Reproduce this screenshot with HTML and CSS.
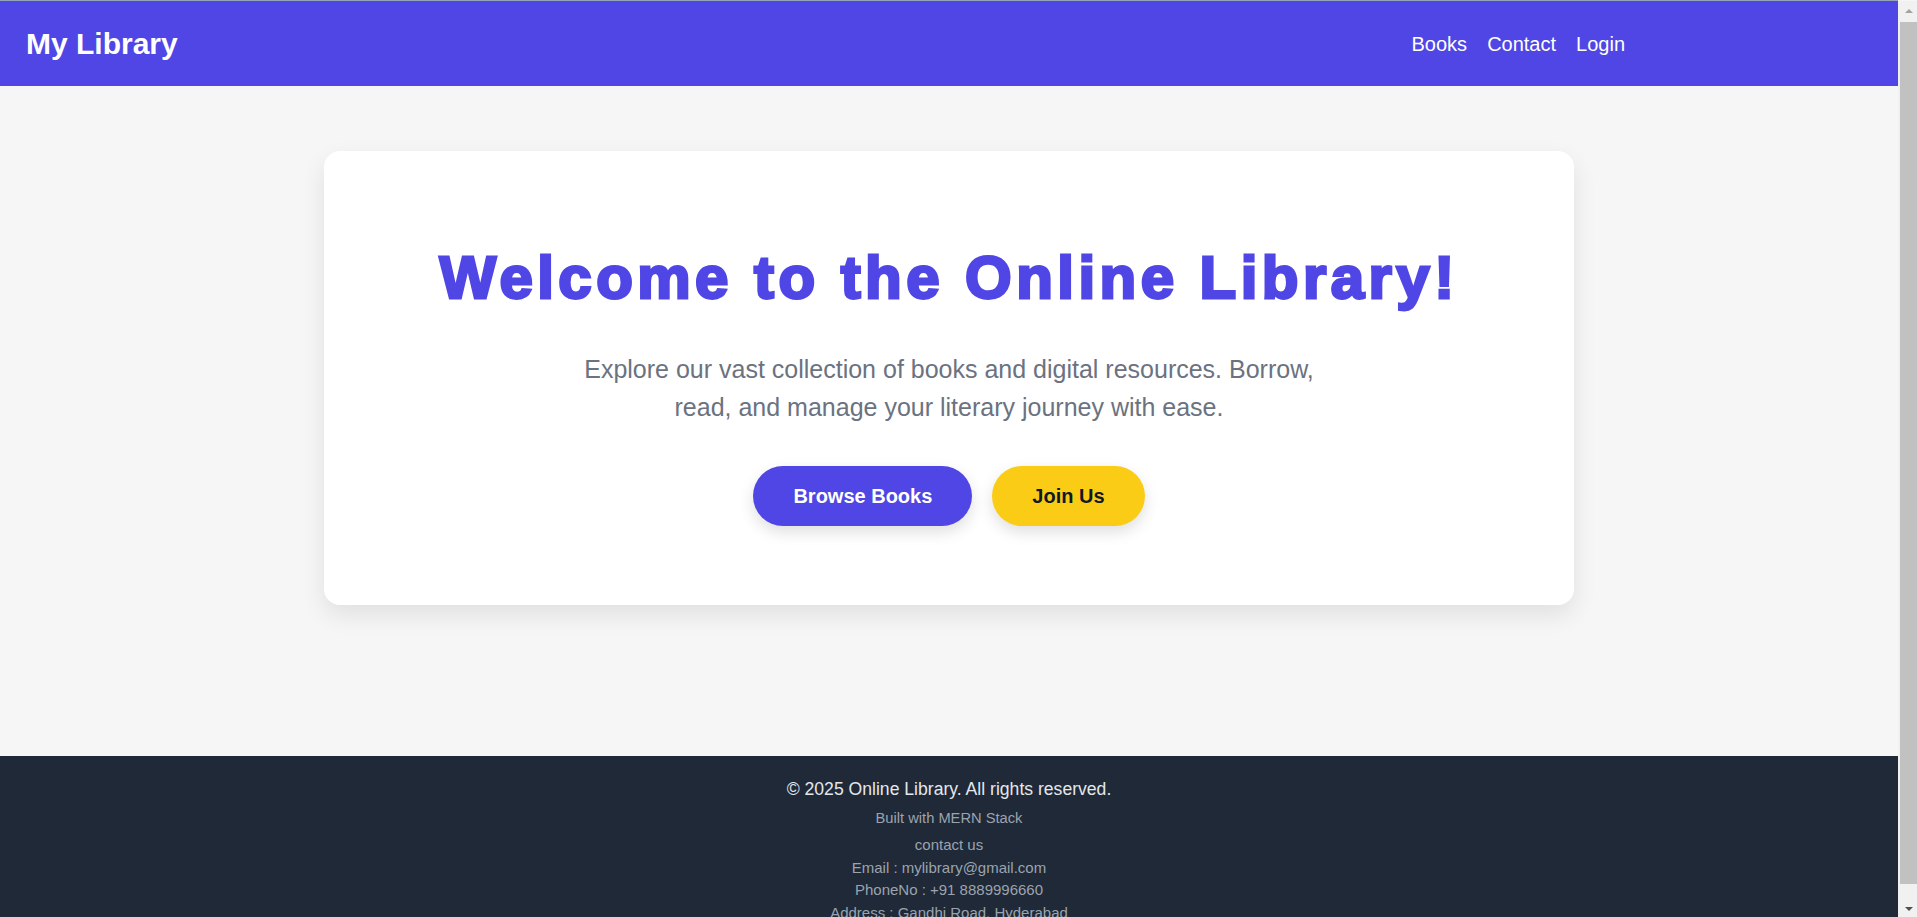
FILE: index.html
```html
<!DOCTYPE html>
<html lang="en">
<head>
<meta charset="utf-8">
<title>My Library</title>
<link rel="stylesheet" href="styles.css">
</head>
<body>
  <header class="navbar">
    <div class="brand">My Library</div>
    <nav class="nav-links">
      <a href="#" class="nav-link">Books</a>
      <a href="#" class="nav-link">Contact</a>
      <a href="#" class="nav-link">Login</a>
    </nav>
  </header>

  <main class="main">
    <section class="hero-card">
      <h1 class="hero-title">Welcome to the Online Library!</h1>
      <p class="hero-text">Explore our vast collection of books and digital resources. Borrow, read, and manage your literary journey with ease.</p>
      <div class="hero-actions">
        <a href="#" class="btn btn-primary">Browse Books</a>
        <a href="#" class="btn btn-secondary">Join Us</a>
      </div>
    </section>
  </main>

  <footer class="footer">
    <p class="footer-copy">© 2025 Online Library. All rights reserved.</p>
    <p class="footer-built">Built with MERN Stack</p>
    <div class="footer-contact">
      <div class="contact-line">contact us</div>
      <div class="contact-line">Email : mylibrary@gmail.com</div>
      <div class="contact-line">PhoneNo : +91 8889996660</div>
      <div class="contact-line">Address : Gandhi Road, Hyderabad</div>
    </div>
  </footer>

  <div class="scrollbar" aria-hidden="true">
    <div class="sb-button"><span class="sb-arrow-up"></span></div>
    <div class="sb-thumb"></div>
    <div class="sb-spacer"></div>
    <div class="sb-button sb-button-bottom"><span class="sb-arrow-down"></span></div>
  </div>
</body>
</html>
```

FILE: styles.css
```css
* {
  box-sizing: border-box;
}

html {
  background: #f6f6f6;
}

body {
  margin: 0 19px 0 0;
  font-family: "Liberation Sans", Arial, sans-serif;
  background: #f6f6f6;
  border-top: 1px solid #93a4b6;
}

.navbar {
  height: 85px;
  background: #4f46e5;
  display: flex;
  align-items: center;
  justify-content: space-between;
  padding: 0 273px 0 26px;
}

.brand {
  color: #ffffff;
  font-size: 30px;
  font-weight: 700;
  line-height: 1;
}

.nav-links {
  display: flex;
  gap: 20px;
}

.nav-link {
  color: #ffffff;
  font-size: 20px;
  text-decoration: none;
  line-height: 1;
}

.main {
  padding: 65px 0 151px;
}

.hero-card {
  max-width: 1250px;
  margin: 0 auto;
  background: #ffffff;
  border-radius: 16px;
  box-shadow: 0 10px 25px rgba(0, 0, 0, 0.09);
  padding: 91px 48px 79px;
  text-align: center;
}

.hero-title {
  margin: 0;
  font-size: 60px;
  line-height: 72px;
  font-weight: 700;
  letter-spacing: 4.45px;
  color: #4f46e5;
  -webkit-text-stroke: 2.8px #4f46e5;
  white-space: nowrap;
}

.hero-text {
  margin: 36px auto 0;
  max-width: 760px;
  font-size: 25px;
  line-height: 38px;
  color: #6b7280;
}

.hero-actions {
  margin-top: 40px;
  display: flex;
  justify-content: center;
  gap: 20px;
}

.btn {
  display: inline-block;
  padding: 18px 40px;
  border-radius: 9999px;
  font-size: 20px;
  line-height: 24px;
  font-weight: 700;
  text-decoration: none;
  box-shadow: 0 6px 15px rgba(0, 0, 0, 0.13);
}

.btn-primary {
  background: #4f46e5;
  color: #ffffff;
}

.btn-secondary {
  background: #facc15;
  color: #111827;
}

.footer {
  background: #1f2937;
  text-align: center;
  padding: 21px 0 16px;
}

.footer-copy {
  margin: 0;
  font-size: 17.6px;
  line-height: 24px;
  color: #e5e7eb;
}

.footer-built {
  margin: 6px 0 0;
  font-size: 14.7px;
  line-height: 22px;
  color: #9ca3af;
}

.footer-contact {
  margin-top: 5px;
}

.contact-line {
  font-size: 15px;
  line-height: 22.5px;
  color: #9ca3af;
}

/* window scrollbar chrome (drawn over the right edge) */
.scrollbar {
  position: fixed;
  top: 1px;
  right: 0;
  bottom: 0;
  width: 19px;
  background: #f1f1f1;
  display: flex;
  flex-direction: column;
  padding-left: 2px;
}

.sb-button {
  height: 20px;
  display: flex;
  align-items: center;
  justify-content: center;
  flex: none;
}

.sb-button-bottom {
  height: 17px;
}

.sb-arrow-up {
  width: 0;
  height: 0;
  border-left: 4px solid transparent;
  border-right: 4px solid transparent;
  border-bottom: 4px solid #a3a3a3;
}

.sb-arrow-down {
  width: 0;
  height: 0;
  border-left: 4px solid transparent;
  border-right: 4px solid transparent;
  border-top: 4px solid #505050;
}

.sb-thumb {
  height: 862px;
  margin-top: 1px;
  background: #c1c1c1;
  flex: none;
}

.sb-spacer {
  flex: 1;
}
```
